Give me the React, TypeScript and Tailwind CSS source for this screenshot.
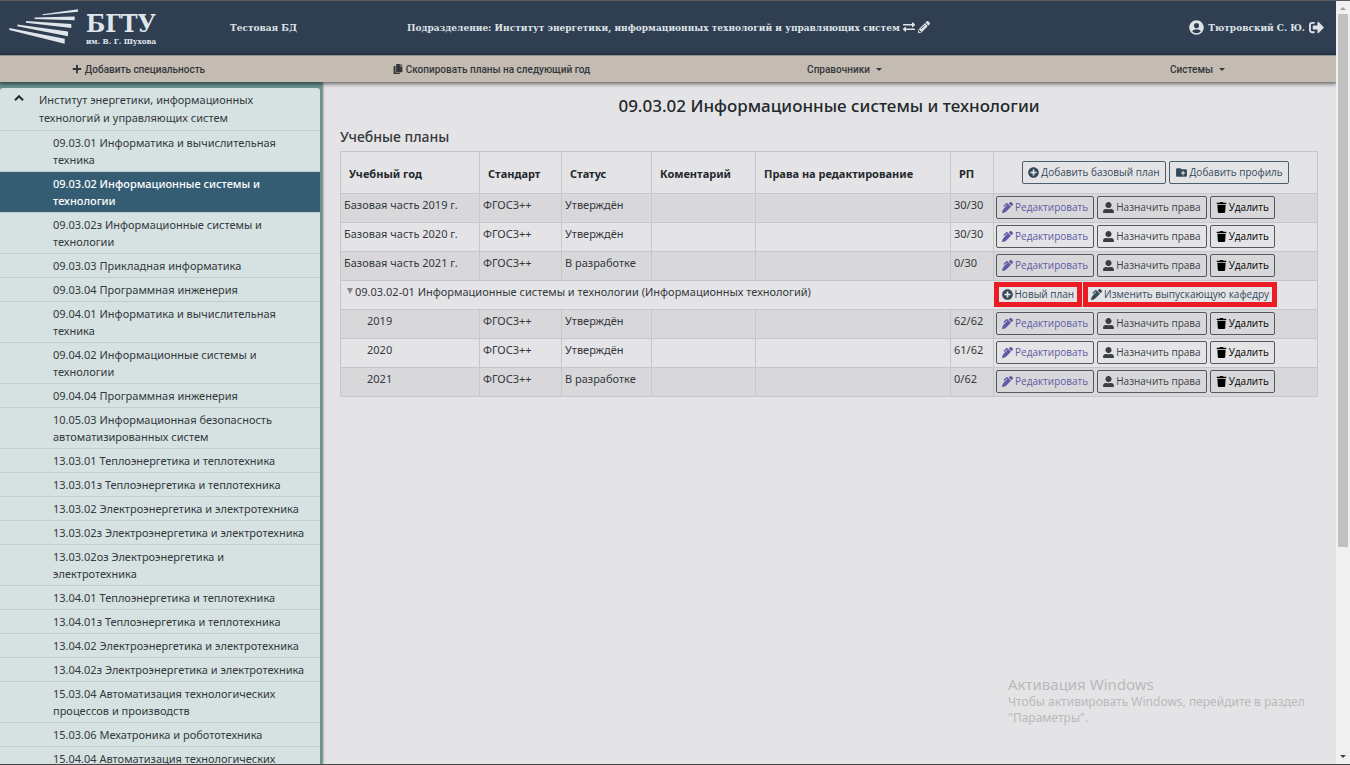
import React from "react";
import {
  FaPlus,
  FaCopy,
  FaExchangeAlt,
  FaPencilAlt,
  FaUserCircle,
  FaSignOutAlt,
  FaPlusCircle,
  FaTrash,
  FaPenAlt,
  FaUserAlt,
} from "react-icons/fa";
import { MdCreateNewFolder } from "react-icons/md";

const specialties = [
  "09.03.01 Информатика и вычислительная техника",
  "09.03.02 Информационные системы и технологии",
  "09.03.02з Информационные системы и технологии",
  "09.03.03 Прикладная информатика",
  "09.03.04 Программная инженерия",
  "09.04.01 Информатика и вычислительная техника",
  "09.04.02 Информационные системы и технологии",
  "09.04.04 Программная инженерия",
  "10.05.03 Информационная безопасность автоматизированных систем",
  "13.03.01 Теплоэнергетика и теплотехника",
  "13.03.01з Теплоэнергетика и теплотехника",
  "13.03.02 Электроэнергетика и электротехника",
  "13.03.02з Электроэнергетика и электротехника",
  "13.03.02оз Электроэнергетика и электротехника",
  "13.04.01 Теплоэнергетика и теплотехника",
  "13.04.01з Теплоэнергетика и теплотехника",
  "13.04.02 Электроэнергетика и электротехника",
  "13.04.02з Электроэнергетика и электротехника",
  "15.03.04 Автоматизация технологических процессов и производств",
  "15.03.06 Мехатроника и робототехника",
  "15.04.04 Автоматизация технологических",
];

const SELECTED = 1;

type Plan = { name: string; status: string; rp: string };

const basePlans: Plan[] = [
  { name: "Базовая часть 2019 г.", status: "Утверждён", rp: "30/30" },
  { name: "Базовая часть 2020 г.", status: "Утверждён", rp: "30/30" },
  { name: "Базовая часть 2021 г.", status: "В разработке", rp: "0/30" },
];

const profilePlans: Plan[] = [
  { name: "2019", status: "Утверждён", rp: "62/62" },
  { name: "2020", status: "Утверждён", rp: "61/62" },
  { name: "2021", status: "В разработке", rp: "0/62" },
];

function Logo() {
  return (
    <a href="#" className="flex items-center gap-[7px] text-[#dfe5ea]">
      <svg viewBox="0 0 70 36" className="h-9 w-[70px]" fill="currentColor" aria-hidden="true">
        <path d="M33.500 5.300 69 .3v2.500L33.500 6.300z" />
        <path d="M25.500 8.500 65.700 7.400v3.800L25.500 10z" />
        <path d="M17 12 62.300 15v4L17 13.800z" />
        <path d="M8.300 15.500 59 22.600v4.600L8.300 17.300z" />
        <path d="M.3 19 55.700 29.800v5L.3 21z" />
      </svg>
      <span className="flex flex-col pt-1 font-['DejaVu_Serif_Condensed','DejaVu_Serif',serif]">
        <span className="text-[25px] leading-6 font-bold">БГТУ</span>
        <span className="text-[8px] leading-[10px] whitespace-nowrap">им. В. Г. Шухова</span>
      </span>
    </a>
  );
}

function Caret() {
  return (
    <svg viewBox="0 0 6 3" className="ml-[3px] h-[3px] w-[6px]" fill="currentColor" aria-hidden="true">
      <path d="M0 0h6L3 3z" />
    </svg>
  );
}

function NavItem({ icon, caret, children }: { icon?: React.ReactNode; caret?: boolean; children: React.ReactNode }) {
  return (
    <button type="button" className="flex h-full items-center justify-center gap-[3px] font-medium">
      {icon}
      {children}
      {caret && <Caret />}
    </button>
  );
}

function ActionButton({
  icon,
  tone,
  marked,
  children,
}: {
  icon: React.ReactNode;
  tone: string;
  marked?: boolean;
  children: React.ReactNode;
}) {
  return (
    <button
      type="button"
      className={`relative flex h-[23px] items-center gap-[2px] rounded-[2px] border px-[5px] font-['Open_Sans',sans-serif] text-[10px] whitespace-nowrap ${tone}`}
    >
      {icon}
      {children}
      {marked && <span className="absolute -inset-x-[3px] -inset-y-[2px] border-5 border-[#ed1c24]" />}
    </button>
  );
}

const cell = "border border-[#c3c8cb] p-[3px] align-top leading-4";

function PlanRow({ plan, shaded, nested }: { plan: Plan; shaded: boolean; nested?: boolean }) {
  return (
    <tr className={`h-[29px] ${shaded ? "bg-[#d8d8da]" : ""}`}>
      <td className={`${cell} ${nested ? "pl-[26px]" : ""}`}>{plan.name}</td>
      <td className={cell}>ФГОС3++</td>
      <td className={cell}>{plan.status}</td>
      <td className={cell} />
      <td className={cell} />
      <td className={cell}>{plan.rp}</td>
      <td className="border border-[#c3c8cb] px-[2px] pt-[2px] align-top">
        <div className="flex gap-[3px]">
          <ActionButton tone="border-[#55585c] text-[#5f5aa5]" icon={<FaPenAlt className="size-[11px]" />}>
            Редактировать
          </ActionButton>
          <ActionButton tone="border-[#55585c] text-[#3a3f44]" icon={<FaUserAlt className="size-[11px]" />}>
            Назначить права
          </ActionButton>
          <ActionButton tone="border-[#55585c] text-black" icon={<FaTrash className="size-[11px]" />}>
            Удалить
          </ActionButton>
        </div>
      </td>
    </tr>
  );
}

export default function App() {
  return (
    <div className="flex h-screen overflow-hidden border-t border-b border-t-[#58585a] border-b-[#444444] bg-[#e4e4e6] font-['Noto_Sans',sans-serif] text-[#33383d]">
      <div className="flex min-w-0 flex-1 flex-col">
        <header className="flex h-[54px] shrink-0 items-center bg-[#2f3e50] pr-3 pb-[2px] pl-[9px] font-['DejaVu_Serif_Condensed','DejaVu_Serif',serif] text-[10px] font-bold text-[#dde3e8]">
          <div className="w-[221px] shrink-0">
            <Logo />
          </div>
          <span className="w-[177px] shrink-0">Тестовая БД</span>
          <div className="flex flex-1 items-center gap-[3px] whitespace-nowrap">
            <span>Подразделение: Институт энергетики, информационных технологий и управляющих систем</span>
            <button type="button" aria-label="Сменить подразделение">
              <FaExchangeAlt className="size-3" />
            </button>
            <button type="button" aria-label="Редактировать подразделение">
              <FaPencilAlt className="size-3" />
            </button>
          </div>
          <div className="flex items-center gap-1 whitespace-nowrap">
            <FaUserCircle className="size-[15px]" />
            <span>Тютровский С. Ю.</span>
            <button type="button" aria-label="Выйти">
              <FaSignOutAlt className="size-[15px]" />
            </button>
          </div>
        </header>

        <nav className="relative z-10 h-[27px] shrink-0 border-t border-[#8d8f92] bg-[#c4bbb3] font-[Roboto,sans-serif] text-[10px] text-[#33373b] shadow-[0_1px_4px_1px_rgba(0,0,0,0.55)]">
          <div className="-mx-[38px] grid h-full grid-cols-4">
            <NavItem icon={<FaPlus className="size-[10px]" />}>Добавить специальность</NavItem>
            <NavItem icon={<FaCopy className="size-[10px]" />}>Скопировать планы на следующий год</NavItem>
            <NavItem caret>Справочники</NavItem>
            <NavItem caret>Системы</NavItem>
          </div>
        </nav>

        <div className="flex min-h-0 flex-1">
          <aside className="w-[322px] shrink-0 overflow-hidden bg-[#6a9390] pt-[6px] pr-[2px] shadow-[1px_0_2px_rgba(0,0,0,0.5)]">
            <div className="rounded-t-[3px] bg-[#d6e2e1] text-[11px]">
              <button
                type="button"
                className="flex w-full items-start border-b border-[#c2cecf] py-[3px] pl-[14px] text-left leading-[18px]"
              >
                <svg viewBox="0 0 10 6" className="mt-1 mr-[15px] h-[6px] w-[10px] shrink-0" fill="none" stroke="#23282c" strokeWidth="2" aria-hidden="true">
                  <path d="M1 5.200 5 1.200l4 4" />
                </svg>
                <span className="w-[230px]">Институт энергетики, информационных технологий и управляющих систем</span>
              </button>
              <ul>
                {specialties.map((name, i) => (
                  <li key={name}>
                    <a
                      href="#"
                      className={`block border-b border-[#c2cecf] py-[3px] pr-[14px] pl-[53px] leading-[17px] ${
                        i === SELECTED ? "bg-[#345c72] font-medium text-white" : ""
                      }`}
                    >
                      {name}
                    </a>
                  </li>
                ))}
              </ul>
            </div>
          </aside>

          <main className="relative min-w-0 flex-1 pt-3 pr-[18px] pl-[18px]">
            <h1 className="text-center text-[17px] leading-6 font-medium text-[#23282c]">
              09.03.02 Информационные системы и технологии
            </h1>
            <h2 className="mt-[9px] mb-1 text-[14px] leading-5 font-medium">Учебные планы</h2>
            <table className="w-full table-fixed border-collapse text-[11px]">
              <colgroup>
                <col className="w-[139px]" />
                <col className="w-[82px]" />
                <col className="w-[90px]" />
                <col className="w-[104px]" />
                <col className="w-[195px]" />
                <col className="w-[43px]" />
                <col />
              </colgroup>
              <thead>
                <tr className="h-[42px] text-left text-[#23282c]">
                  {["Учебный год", "Стандарт", "Статус", "Коментарий", "Права на редактирование", "РП"].map((h) => (
                    <th key={h} className="border border-[#c3c8cb] px-2 pt-1 font-bold">
                      {h}
                    </th>
                  ))}
                  <th className="border border-[#c3c8cb] font-normal">
                    <div className="flex justify-center gap-[3px]">
                      <ActionButton tone="border-[#4c5d6c] text-[#34495a]" icon={<FaPlusCircle className="size-[11px]" />}>
                        Добавить базовый план
                      </ActionButton>
                      <ActionButton tone="border-[#4c5d6c] text-[#34495a]" icon={<MdCreateNewFolder className="size-[13px]" />}>
                        Добавить профиль
                      </ActionButton>
                    </div>
                  </th>
                </tr>
              </thead>
              <tbody>
                {basePlans.map((plan, i) => (
                  <PlanRow key={plan.name} plan={plan} shaded={i % 2 === 0} />
                ))}
                <tr className="h-[29px]">
                  <td colSpan={6} className="border border-r-0 border-[#c3c8cb] px-[6px] py-[3px] align-top leading-4">
                    <button type="button" className="flex items-start gap-[2px]">
                      <svg viewBox="0 0 6 6" className="mt-1 size-[6px]" fill="#85888b" aria-hidden="true">
                        <path d="M0 0h6L3 6z" />
                      </svg>
                      09.03.02-01 Информационные системы и технологии (Информационных технологий)
                    </button>
                  </td>
                  <td className="border border-l-0 border-[#c3c8cb] px-[2px] pt-[2px] align-top">
                    <div className="flex gap-[5px]">
                      <ActionButton marked tone="border-[#4c5d6c] text-[#34495a]" icon={<FaPlusCircle className="size-[11px]" />}>
                        Новый план
                      </ActionButton>
                      <ActionButton marked tone="border-[#4c5d6c] text-[#34495a]" icon={<FaPenAlt className="size-[11px]" />}>
                        Изменить выпускающую кафедру
                      </ActionButton>
                    </div>
                  </td>
                </tr>
                {profilePlans.map((plan, i) => (
                  <PlanRow key={plan.name} plan={plan} shaded={i % 2 === 0} nested />
                ))}
              </tbody>
            </table>

            <div className="pointer-events-none absolute right-6 bottom-[38px] w-[304px] text-[#b9b9bb]">
              <p className="text-[15px] leading-5">Активация Windows</p>
              <p className="text-[12px] leading-4">Чтобы активировать Windows, перейдите в раздел "Параметры".</p>
            </div>
          </main>
        </div>
      </div>

      <div className="relative z-20 flex w-[14px] shrink-0 flex-col items-center bg-[#f1f1f1] py-[6px]" aria-hidden="true">
        <svg viewBox="0 0 6 3" className="h-[3px] w-[6px]" fill="#a0a0a0">
          <path d="M0 3h6L3 0z" />
        </svg>
        <div className="mt-1 h-[71%] w-[10px] bg-[#c1c1c1]" />
        <svg viewBox="0 0 6 3" className="mt-auto h-[3px] w-[6px]" fill="#444444">
          <path d="M0 0h6L3 3z" />
        </svg>
      </div>
    </div>
  );
}
